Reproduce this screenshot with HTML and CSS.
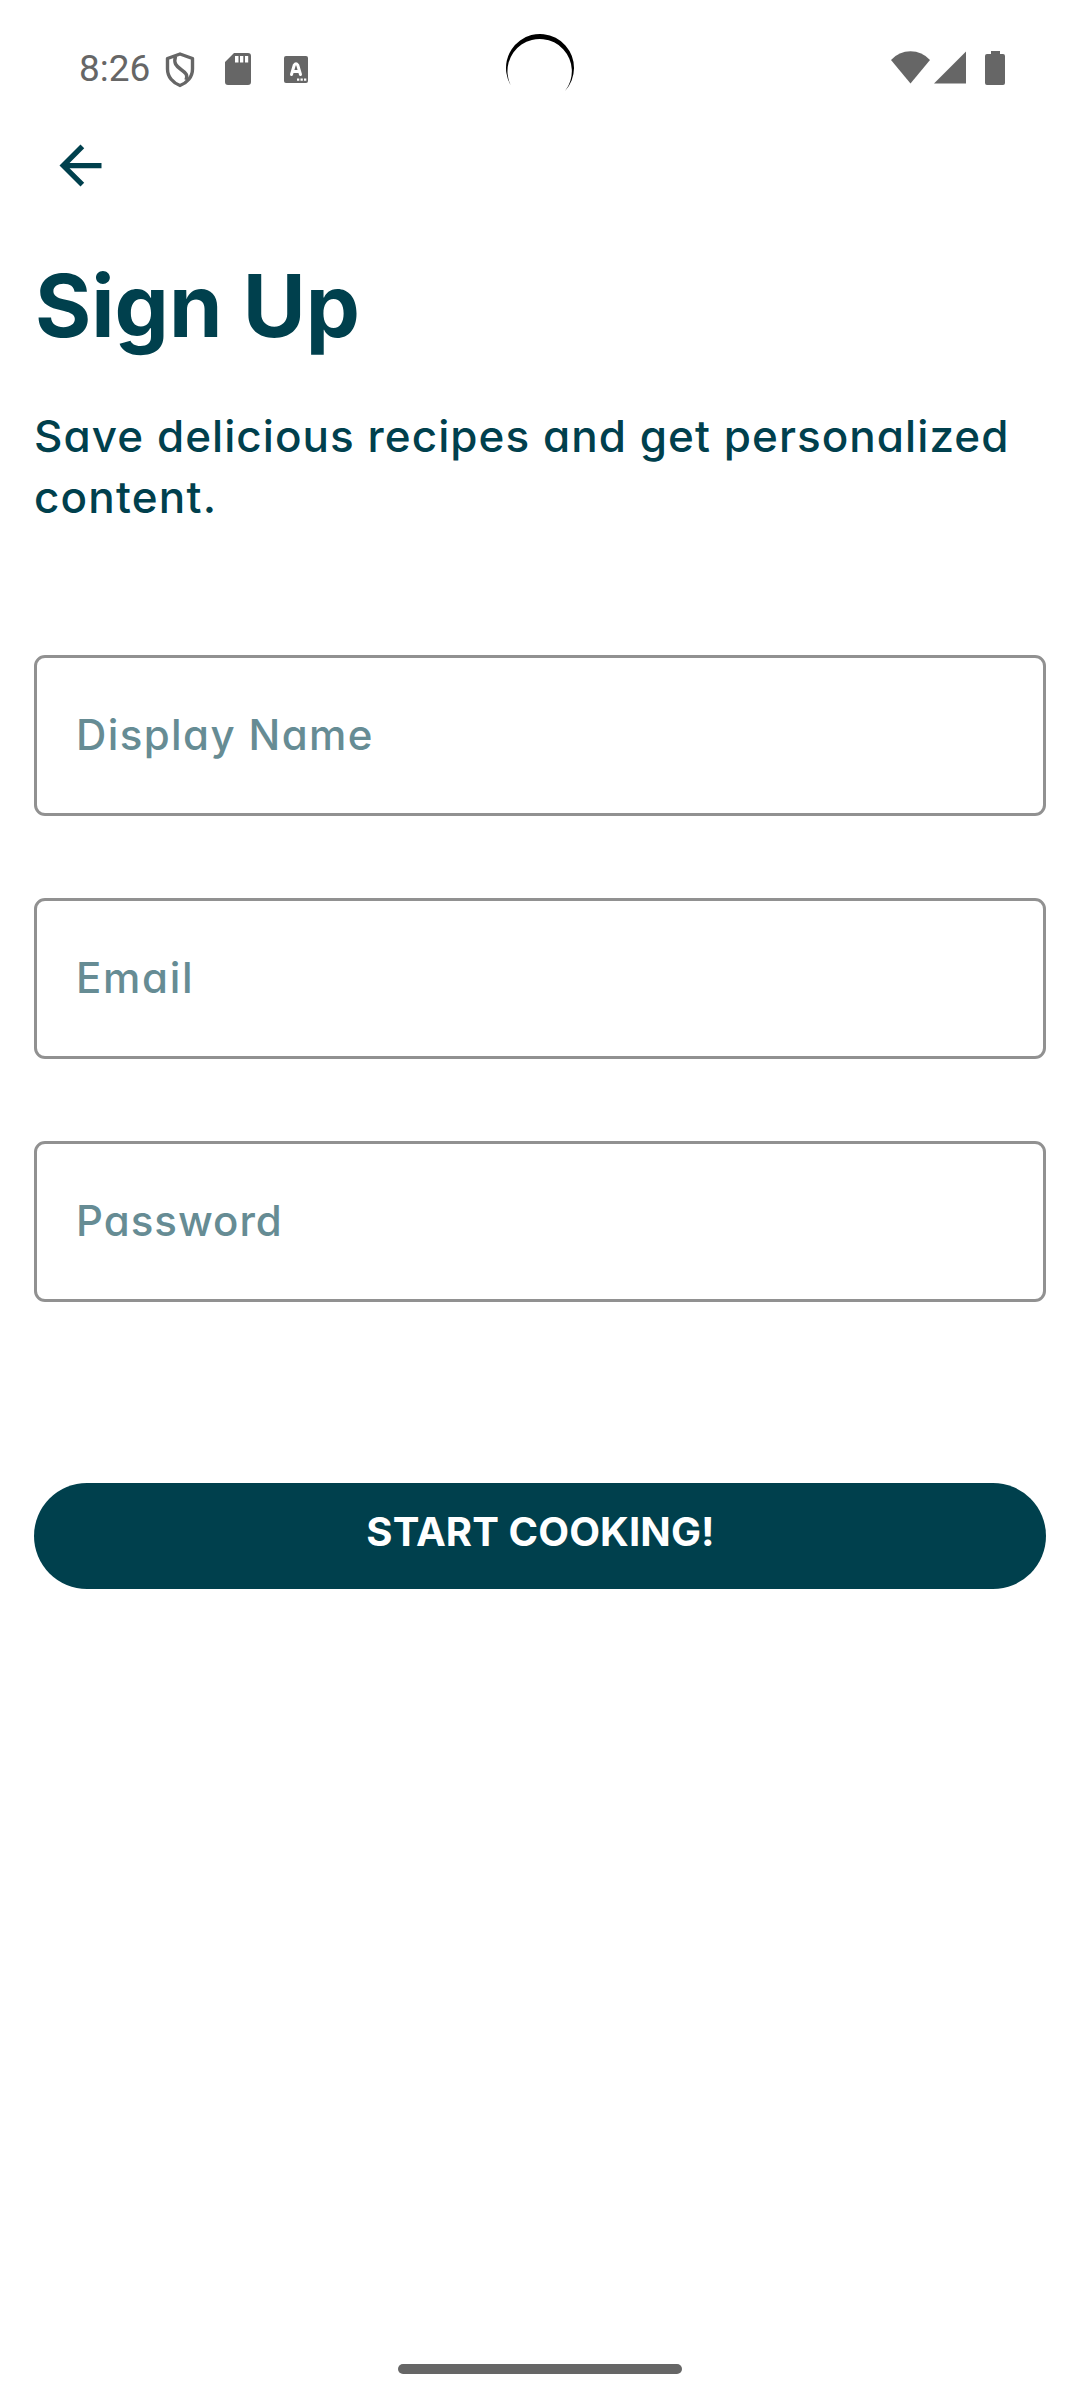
FILE: index.html
```html
<!DOCTYPE html>
<html lang="en">
<head>
<meta charset="utf-8">
<title>Sign Up</title>
<link rel="stylesheet" href="styles.css">
</head>
<body>
<div class="screen">
  <header class="status">
    <div class="status-left">
      <span class="time">8:26</span>
      <svg class="shield" width="30" height="36" viewBox="0 0 30 36" fill="none" stroke="#666" stroke-width="3.400" stroke-linejoin="round"><path d="M15 2 27.500 6.500V17C27.500 25 22 31 15 33.500C8 31 2.500 25 2.500 17V6.500Z"/><path d="M10.500 4.500C8.500 11 11 14 16 17.500S23 23 21 28"/></svg>
      <svg class="sd" width="26" height="32" viewBox="0 0 26 32"><path fill="#666" fill-rule="evenodd" d="M9 0H23Q26 0 26 3V29Q26 32 23 32H3Q0 32 0 29V9ZM10 3V9.500H13.500V3ZM15 3V9.500H18.300V3ZM20 3V9.500H23.200V3Z"/></svg>
      <svg class="lang" width="24" height="27" viewBox="0 0 24 27"><rect width="24" height="27" rx="2" fill="#666"/><path d="M7.500 18.500 10.300 9Q12 6.500 13.700 9L16.500 18.500M9 15.500H15" fill="none" stroke="#fff" stroke-width="3" stroke-linecap="round"/><path d="M13 22.500h2.300v2.300H13zM16.500 22.500h2.300v2.300h-2.300zM20 22.500h2.300v2.300H20z" fill="#fff"/></svg>
    </div>
    <svg class="camera" width="70" height="60" viewBox="505 33 70 60"><path d="M510.600 85A34 34 0 1 1 565 91A32.200 32.200 0 1 0 510.600 85Z"/></svg>
    <svg class="signals" width="115" height="36" viewBox="891 51 115 36" fill="#666"><path d="M891 60Q899 51.300 910.500 51.300T930 60L910.500 83.500Z"/><path d="M966 51.500V83.500H934Z"/><path d="M991 51H1000V54H1003Q1005 54 1005 56V83Q1005 85 1003 85H987Q985 85 985 83V56Q985 54 987 54H991Z"/></svg>
  </header>
  <nav class="nav">
    <svg width="63" height="63" viewBox="0 0 24 24"><path fill="#00404d" d="M20 11H7.830l5.590-5.590L12 4l-8 8 8 8 1.410-1.410L7.830 13H20v-2z"/></svg>
  </nav>
  <main class="content">
    <h1 class="title">Sign Up</h1>
    <p class="lead">Save delicious recipes and get personalized<br><span class="lead-end">content.</span></p>
    <form class="form">
      <div class="field"><span class="name">Display Name</span></div>
      <div class="field"><span class="email">Email</span></div>
      <div class="field"><span class="password">Password</span></div>
      <button class="submit" type="button">START COOKING!</button>
    </form>
  </main>
  <div class="home"></div>
</div>
</body>
</html>
```
FILE: styles.css
```css
* { box-sizing: border-box; }
body { margin: 0; background: #fff; font-family: Inter, sans-serif; color: #00404d; font-feature-settings: "cv11"; }
.screen { width: 1080px; height: 2400px; display: flex; flex-direction: column; }
.status { height: 134px; display: grid; grid-template-columns: 1fr 70px 1fr; }
.status-left { display: flex; align-items: flex-start; padding-left: 79px; }
.time { width: 86px; font: 400 37px/44px Roboto, sans-serif; color: #666; padding-top: 47px; }
.shield { margin-top: 52px; }
.sd { margin: 53px 0 0 30px; }
.lang { margin: 56px 0 0 33px; }
.camera { margin-top: 33px; }
.signals { justify-self: end; margin: 51px 74px 0 0; }
.nav { height: 63px; padding-left: 49px; }
.nav svg { display: block; }
.content { padding: 0 34px; }
.title { margin: 56px 0 0; padding-left: 1px; font-size: 86px; line-height: 106px; font-weight: 700; }
.lead { margin: 47px 0 0; font-size: 44px; line-height: 61px; font-weight: 500; letter-spacing: 1.05px; white-space: nowrap; }
.lead-end { letter-spacing: 1.2px; }
.form { display: flex; flex-direction: column; gap: 82px; margin-top: 127px; }
.field { height: 161px; padding: 0 39px 2px; border: 3px solid #919191; border-radius: 11px; display: flex; align-items: center; font-size: 42px; font-weight: 500; color: #668c94; }
.name { letter-spacing: 1.4px; }
.email { letter-spacing: 1.7px; }
.password { letter-spacing: 1px; }
.submit { height: 106px; margin-top: 99px; padding: 0 0 8px 1px; border: 0; border-radius: 53px; background: #00404d; color: #fff; font: 700 40px/48px Inter, sans-serif; letter-spacing: 0.1px; }
.home { width: 284px; height: 10px; margin: auto auto 26px; border-radius: 5px; background: #666; }
```
